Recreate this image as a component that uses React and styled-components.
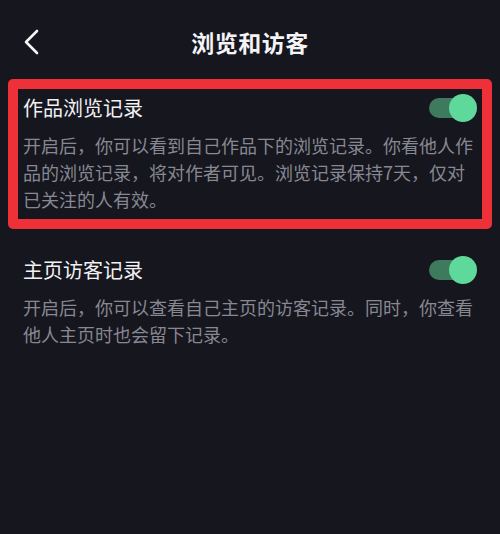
import React from 'react';
import styled, { createGlobalStyle } from 'styled-components';

const GlobalStyle = createGlobalStyle`
    html, body {
        margin: 0;
        padding: 0;
        background: #16161f;
    }
    body {
        font-family: "Noto Sans CJK SC", "Noto Sans", sans-serif;
    }
`

const Page = styled.div`
    width: 500px;
    min-height: 534px;
    background: #16161f;
    padding: 0 8px;
    box-sizing: border-box;
`

const Header = styled.div`
    position: relative;
    height: 74px;
    padding-top: 5px;
    display: flex;
    align-items: center;
    justify-content: center;
`

const BackButton = styled.button`
    position: absolute;
    left: 14px;
    top: 5px;
    height: 74px;
    width: 24px;
    padding: 0;
    border: none;
    background: transparent;
    display: flex;
    align-items: center;
    cursor: pointer;
`

const Title = styled.h1`
    margin: 0;
    font-size: 23px;
    font-weight: 700;
    color: #f4f4f6;
    letter-spacing: 0.5px;
`

const Section = styled.div`
    border: 10px solid ${props => props.highlighted ? '#ee3138' : 'transparent'};
    border-radius: 5px;
    padding: 5px 4px 6px 5px;
    margin-bottom: 12px;
`

const Row = styled.div`
    display: flex;
    align-items: center;
    justify-content: space-between;
    height: 28px;
`

const Label = styled.span`
    font-size: 20px;
    font-weight: 400;
    color: #f1f1f3;
    line-height: 28px;
`

const Desc = styled.p`
    margin: 10px 0 0;
    font-size: 18px;
    line-height: 27px;
    color: #878891;
`

const Track = styled.div`
    position: relative;
    width: 46px;
    height: 20px;
    border-radius: 10px;
    background: ${props => props.on ? '#3e7a5d' : '#44454e'};
    margin-right: 3px;
`

const Knob = styled.div`
    position: absolute;
    top: -4px;
    ${props => props.on ? 'right: -2px;' : 'left: -2px;'}
    width: 28px;
    height: 28px;
    border-radius: 50%;
    background: ${props => props.on ? '#5fd89b' : '#d8d8dc'};
`

const Toggle = ({ on }) => (
    <Track on={on ? 1 : 0}>
        <Knob on={on ? 1 : 0} />
    </Track>
)

const items = [
    {
        label: '作品浏览记录',
        desc: '开启后，你可以看到自己作品下的浏览记录。你看他人作品的浏览记录，将对作者可见。浏览记录保持7天，仅对已关注的人有效。',
        highlighted: true
    },
    {
        label: '主页访客记录',
        desc: '开启后，你可以查看自己主页的访客记录。同时，你查看他人主页时也会留下记录。',
        highlighted: false
    }
]

const App = () => (
    <>
        <GlobalStyle />
        <Page>
            <Header>
                <BackButton aria-label="back">
                    <svg width="18" height="26" viewBox="0 0 18 26" fill="none">
                        <path d="M15 2 L4 13 L15 24" stroke="#f4f4f6" strokeWidth="2.6" strokeLinecap="round" strokeLinejoin="round" />
                    </svg>
                </BackButton>
                <Title>浏览和访客</Title>
            </Header>
            {items.map((item, index) => (
                <Section key={index} highlighted={item.highlighted ? 1 : 0}>
                    <Row>
                        <Label>{item.label}</Label>
                        <Toggle on />
                    </Row>
                    <Desc>{item.desc}</Desc>
                </Section>
            ))}
        </Page>
    </>
)

export default App;
